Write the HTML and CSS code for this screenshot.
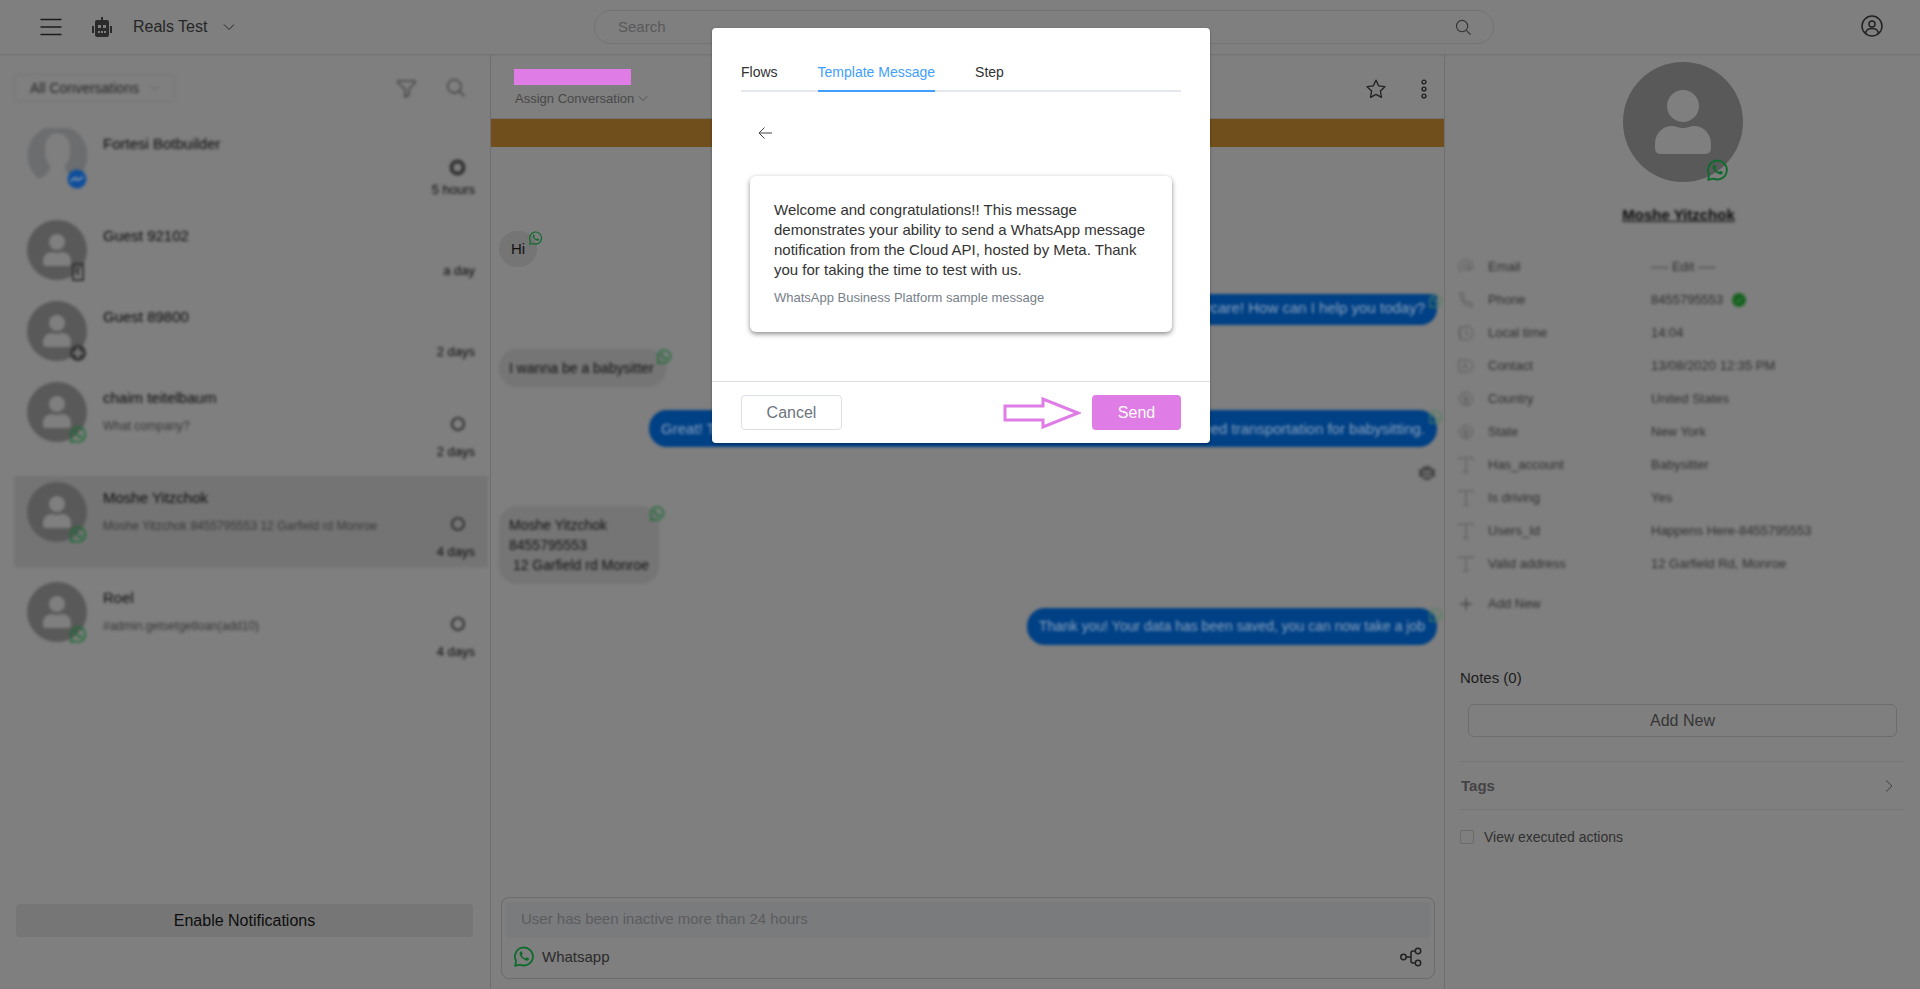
FILE: index.html
```html
<!DOCTYPE html>
<html lang="en">
<head>
<meta charset="utf-8">
<title>Conversations</title>
<link rel="stylesheet" href="styles.css">
</head>
<body>
<svg class="defs" aria-hidden="true">
  <symbol id="wa" viewBox="0 0 22 22"><path d="M1.200 20.800 2.200 15.600A9.400 9.400 0 1 1 6.600 19.600Z" fill="none" stroke="currentColor" stroke-width="1.900" stroke-linejoin="round"/><path d="M8 5.900c-.5-.6-1.300-.3-1.700.3-1.300 1.900.2 4.500 2.200 6.500 2.200 2.200 4.900 3.500 6.600 2.200.8-.6.9-1.500.6-1.900l-2.200-1.200c-.7-.2-1.100 1.100-1.700 1.100-1.400-.5-2.900-1.900-3.500-3.300 0-.6 1.100-1 .8-1.700Z" fill="currentColor"/></symbol>
  <symbol id="person" viewBox="0 0 120 120"><circle cx="60" cy="60" r="60" fill="#595959"/><circle cx="60" cy="44" r="16" fill="#7f7f7f"/><path d="M32 86V82C32 71 40 64 49 64c4 0 6 2 11 2s7-2 11-2c9 0 17 7 17 18v4q0 6-6 6H38q-6 0-6-6Z" fill="#7f7f7f"/></symbol>
  <symbol id="silhouette" viewBox="0 0 60 60"><path d="M12 51A30 30 0 1 1 49 51C42 47 38 44 38 38c5-6 5-10 5-17C43 10 37 5 30 5s-12 6-12 16c0 7 1 12 5 17 0 6-4 9-11 13Z" fill="#6b6d6f"/></symbol>
  <symbol id="down" viewBox="0 0 12 8"><path d="M1 1.500 6 6.500 11 1.500" fill="none" stroke="currentColor"/></symbol>
  <symbol id="lens" viewBox="0 0 18 18"><circle cx="7.500" cy="7.500" r="6" fill="none" stroke="currentColor" stroke-width="1.200"/><path d="m12 12 4.500 4.500" stroke="currentColor" stroke-width="1.200"/></symbol>
  <symbol id="bot" viewBox="0 0 20 20"><path d="M9 0h2v3h4a2 2 0 0 1 2 2v13a2 2 0 0 1-2 2H5a2 2 0 0 1-2-2V5a2 2 0 0 1 2-2h4ZM0 9h2v7H0ZM18 9h2v7h-2Z" fill="currentColor"/><path d="M6 8h3v3H6ZM11 8h3v3h-3ZM6 14h2v2H6ZM9 14h2v2H9ZM12 14h2v2h-2Z" fill="#7f7f7f"/></symbol>
  <symbol id="state" viewBox="0 0 16 16"><circle cx="8" cy="8" r="6" fill="none" stroke="currentColor" stroke-width="2.200"/></symbol>
  <symbol id="text" viewBox="0 0 16 16"><path d="M1 3V1h14v2M8 1v14M5 15h6" fill="none" stroke="currentColor"/></symbol>
  <symbol id="pin" viewBox="0 0 16 16"><circle cx="8" cy="8" r="6.500" fill="none" stroke="currentColor"/><path d="M6 4v8M6 8h5M6 12h5M9 5v6" fill="none" stroke="currentColor"/></symbol>
</svg>

<header class="topbar">
  <div class="brand">
    <button class="bare" aria-label="Menu"><svg width="22" height="18" viewBox="0 0 22 18"><path d="M0.500 1.500h21M0.500 9h21M0.500 16.500h21" stroke="#1c1c1c" stroke-width="1.500"/></svg></button>
    <svg class="brand-bot" width="20" height="20"><use href="#bot"/></svg>
    <button class="bare workspace">Reals Test <svg width="12" height="8"><use href="#down"/></svg></button>
  </div>
  <div class="search"><input type="text" placeholder="Search" aria-label="Search"><svg width="17" height="17"><use href="#lens"/></svg></div>
  <button class="bare account" aria-label="Account"><svg width="22" height="22" viewBox="0 0 22 22" fill="none" stroke="#222" stroke-width="1.500"><circle cx="11" cy="11" r="10"/><circle cx="11" cy="9" r="3"/><path d="M4.500 18.500c.5-4 3-5 6.500-5s6 1 6.500 5"/></svg></button>
</header>

<div class="columns">
  <aside class="sidebar">
    <div class="soft">
      <div class="filters">
        <button class="picker">All Conversations <svg width="10" height="7"><use href="#down"/></svg></button>
        <button class="bare" aria-label="Filter"><svg width="19" height="19" viewBox="0 0 19 19"><path d="M1 2h17v2l-6 6v6l-4 2v-8L1 4Z" fill="none" stroke="#444" stroke-width="1.500"/></svg></button>
        <button class="bare" aria-label="Search conversations"><svg width="20" height="20"><use href="#lens"/></svg></button>
      </div>
      <ul class="list">
        <li class="item mid">
          <div class="avatar"><svg width="60" height="60"><use href="#silhouette"/></svg><svg class="mark" width="20" height="20" viewBox="0 0 20 20"><circle cx="10" cy="10" r="9.500" fill="#0f4f9c"/><path d="m4 12 4-3 3 2 5-3" fill="none" stroke="#8393a5" stroke-width="2"/></svg></div>
          <div class="who"><b>Fortesi Botbuilder</b></div>
          <div class="meta"><svg width="17" height="17" viewBox="0 0 17 17"><circle cx="8.500" cy="8.500" r="6" fill="none" stroke="#333" stroke-width="4"/></svg><span>5 hours</span></div>
        </li>
        <li class="item short">
          <div class="avatar"><svg width="60" height="60"><use href="#person"/></svg><svg class="mark" width="18" height="18" viewBox="0 0 18 18"><path d="M4 1h10v16H4Z" fill="none" stroke="#333" stroke-width="2"/><path d="M9 5v8" stroke="#333" stroke-width="2"/></svg></div>
          <div class="who"><b>Guest 92102</b></div>
          <div class="meta"><span>a day</span></div>
        </li>
        <li class="item short">
          <div class="avatar"><svg width="60" height="60"><use href="#person"/></svg><svg class="mark" width="18" height="18" viewBox="0 0 18 18"><circle cx="9" cy="9" r="8" fill="#333"/><path d="M9 4v10M4 9h10" stroke="#777" stroke-width="3"/></svg></div>
          <div class="who"><b>Guest 89800</b></div>
          <div class="meta"><span>2 days</span></div>
        </li>
        <li class="item">
          <div class="avatar"><svg width="60" height="60"><use href="#person"/></svg><svg class="mark wa" width="17" height="17"><use href="#wa"/></svg></div>
          <div class="who"><b>chaim teitelbaum</b><span>What company?</span></div>
          <div class="meta"><svg width="16" height="16"><use href="#state"/></svg><span>2 days</span></div>
        </li>
        <li class="item selected">
          <div class="avatar"><svg width="60" height="60"><use href="#person"/></svg><svg class="mark wa" width="17" height="17"><use href="#wa"/></svg></div>
          <div class="who"><b>Moshe Yitzchok</b><span>Moshe Yitzchok 8455795553 12 Garfield rd Monroe</span></div>
          <div class="meta"><svg width="16" height="16"><use href="#state"/></svg><span>4 days</span></div>
        </li>
        <li class="item">
          <div class="avatar"><svg width="60" height="60"><use href="#person"/></svg><svg class="mark wa" width="17" height="17"><use href="#wa"/></svg></div>
          <div class="who"><b>Roel</b><span>#admin.getsetgetloan(add10)</span></div>
          <div class="meta"><svg width="16" height="16"><use href="#state"/></svg><span>4 days</span></div>
        </li>
      </ul>
    </div>
    <button class="enable">Enable Notifications</button>
  </aside>

  <main class="chat">
    <div class="chat-head">
      <div class="contact"><div class="redacted"></div><button class="bare assign">Assign Conversation <svg width="10" height="7"><use href="#down"/></svg></button></div>
      <button class="bare" aria-label="Favourite"><svg width="20" height="20" viewBox="0 0 20 20"><path d="m10 1.200 2.700 5.700 6.200.8-4.500 4.300 1.100 6.400-5.500-3-5.500 3 1.100-6.400L1.100 7.700l6.200-.8Z" fill="none" stroke="#222" stroke-width="1.300" stroke-linejoin="round"/></svg></button>
      <button class="bare" aria-label="More"><svg width="8" height="20" viewBox="0 0 8 20" fill="none" stroke="#222" stroke-width="1.400"><circle cx="4" cy="3" r="1.900"/><circle cx="4" cy="10" r="1.900"/><circle cx="4" cy="17" r="1.900"/></svg></button>
    </div>
    <div class="banner"></div>
    <div class="messages">
      <div class="msg in first">Hi<svg class="tag" width="14" height="14"><use href="#wa"/></svg></div>
      <div class="msg out cut blurred">Hi, thank you for contacting Anycare! How can I help you today?<svg class="tag" width="14" height="14"><use href="#wa"/></svg></div>
      <div class="msg in line blurred">I wanna be a babysitter<svg class="tag" width="15" height="15"><use href="#wa"/></svg></div>
      <div class="msg out wide blurred"><span>Great! To</span><span>need transportation for babysitting.</span><svg class="tag" width="14" height="14"><use href="#wa"/></svg></div>
      <svg class="sender blurred" width="20" height="18" viewBox="0 0 20 18"><path d="M2 5h3l2-3h6l2 3h3v8h-3l-2 3H7l-2-3H2Z" fill="#484848"/><path d="M6 8h8M6 12h8" stroke="#777" stroke-width="2"/></svg>
      <div class="msg in block blurred">Moshe Yitzchok<br>8455795553<br>&nbsp;12 Garfield rd Monroe<svg class="tag" width="15" height="15"><use href="#wa"/></svg></div>
      <div class="msg out last blurred">Thank you! Your data has been saved, you can now take a job<svg class="tag" width="14" height="14"><use href="#wa"/></svg></div>
    </div>
    <div class="composer">
      <input type="text" placeholder="User has been inactive more than 24 hours" aria-label="Message" disabled>
      <div class="channel"><svg class="wa" width="21" height="21"><use href="#wa"/></svg><span>Whatsapp</span>
        <button class="bare" aria-label="Send flow"><svg width="22" height="20" viewBox="0 0 22 20" fill="none" stroke="#222" stroke-width="1.500"><circle cx="3.500" cy="10" r="2.700"/><circle cx="18" cy="4" r="2.700"/><circle cx="18" cy="16" r="2.700"/><path d="M6.200 10H11M15.300 4H13q-2 0-2 2v8q0 2 2 2h2.300"/></svg></button></div>
    </div>
  </main>

  <aside class="details">
    <div class="portrait"><svg width="120" height="120"><use href="#person"/></svg><svg class="mark wa" width="22" height="22"><use href="#wa"/></svg></div>
    <a class="name blurred" href="#">Moshe Yitzchok</a>
    <dl class="fields blurred">
      <div><dt><svg width="16" height="16" viewBox="0 0 16 16" fill="none" stroke="currentColor"><circle cx="8" cy="8" r="3"/><path d="M11 5v5q4 2 4-2a7 7 0 1 0-11 5.500"/></svg>Email</dt><dd>---- Edit ----</dd></div>
      <div><dt><svg width="16" height="16" viewBox="0 0 16 16" fill="none" stroke="currentColor"><path d="M2 1c0 8 5 13 12 14v-4l-4-1-2 1L5 7l1-2-1-4Z"/></svg>Phone</dt><dd>8455795553 <svg class="ok" width="14" height="14" viewBox="0 0 14 14"><circle cx="7" cy="7" r="7" fill="#17621f"/><path d="m4 7 2 2 4-4" fill="none" stroke="#56805a" stroke-width="1"/></svg></dd></div>
      <div><dt><svg width="16" height="16" viewBox="0 0 16 16" fill="none" stroke="currentColor"><circle cx="8" cy="8" r="7"/><path d="M2 1v14M8 4v5h3"/></svg>Local time</dt><dd>14:04</dd></div>
      <div><dt><svg width="16" height="16" viewBox="0 0 16 16" fill="none" stroke="currentColor"><path d="M1 2h8a6 6 0 0 1 0 12H1ZM5 11l2-6 3 6"/></svg>Contact</dt><dd>13/08/2020 12:35 PM</dd></div>
      <div><dt><svg width="16" height="16"><use href="#pin"/></svg>Country</dt><dd>United States</dd></div>
      <div><dt><svg width="16" height="16"><use href="#pin"/></svg>State</dt><dd>New York</dd></div>
      <div><dt><svg width="16" height="16"><use href="#text"/></svg>Has_account</dt><dd>Babysitter</dd></div>
      <div><dt><svg width="16" height="16"><use href="#text"/></svg>Is driving</dt><dd>Yes</dd></div>
      <div><dt><svg width="16" height="16"><use href="#text"/></svg>Users_Id</dt><dd>Happens Here-8455795553</dd></div>
      <div><dt><svg width="16" height="16"><use href="#text"/></svg>Valid address</dt><dd>12 Garfield Rd, Monroe</dd></div>
    </dl>
    <button class="bare add-field blurred"><svg width="12" height="12" viewBox="0 0 12 12"><path d="M6 0v12M0 6h12" stroke="currentColor"/></svg>Add New</button>
    <h2 class="notes">Notes (0)</h2>
    <button class="add-note">Add New</button>
    <button class="tags">Tags <svg width="8" height="12" viewBox="0 0 8 12"><path d="m1 .5 6 5.500-6 5.500" fill="none" stroke="#444"/></svg></button>
    <label class="executed"><input type="checkbox">View executed actions</label>
  </aside>
</div>

<div class="modal" role="dialog" aria-label="Send message">
  <div class="modal-body">
    <nav class="tabs"><a href="#">Flows</a><a href="#" class="active">Template Message</a><a href="#">Step</a></nav>
    <button class="bare back" aria-label="Back"><svg width="14" height="12" viewBox="0 0 14 12"><path d="M6.500.5 1 6l5.500 5.500M1 6h13" fill="none" stroke="#444"/></svg></button>
    <div class="card">
      <p>Welcome and congratulations!! This message demonstrates your ability to send a WhatsApp message notification from the Cloud API, hosted by Meta. Thank you for taking the time to test with us.</p>
      <small>WhatsApp Business Platform sample message</small>
    </div>
  </div>
  <div class="modal-foot">
    <button class="cancel">Cancel</button>
    <svg class="pointer" width="78" height="32" viewBox="0 0 78 32"><path d="M2 9h38V2l35 14-35 14v-7H2Z" fill="none" stroke="#df7ce6" stroke-width="3"/></svg>
    <button class="send">Send</button>
  </div>
</div>
</body>
</html>
```
FILE: styles.css
```css
* { box-sizing: border-box; }
body {
  margin: 0; min-height: 100vh; display: flex; flex-direction: column;
  background: #7f7f7f; color: #1c1c1c;
  font: 15px/20px "Liberation Sans", Arial, sans-serif;
}
svg { display: block; flex: none; }
button, input { font: inherit; }
.defs { position: absolute; width: 0; height: 0; }
.bare { border: 0; padding: 0; background: none; color: inherit; }
.wa, .tag { color: #0e6b2d; }
.blurred, .soft { filter: blur(1.4px); }

.topbar { height: 54px; display: flex; align-items: center; padding: 0 37px 0 40px; box-shadow: 0 1px 2px #707070; }
.brand { flex: 0 0 554px; display: flex; align-items: center; }
.brand-bot { margin: 0 21px 0 30px; color: #2b2b2b; }
.workspace { display: flex; align-items: center; gap: 16px; font-size: 16px; color: #262626; }
.search { flex: 0 1 900px; height: 34px; display: flex; align-items: center; padding: 0 21px; border: 1px solid #737373; border-radius: 17px; color: #333; }
.search input { flex: 1; min-width: 0; border: 0; outline: 0; background: none; }
.search input::placeholder { color: #595959; opacity: 1; }
.account { margin-left: auto; padding-bottom: 3px; }

.columns { flex: 1; display: grid; grid-template-columns: 491px minmax(0, 1fr) 475px; }

.sidebar { display: flex; flex-direction: column; justify-content: space-between; border-right: 1px solid #6e6e6e; padding: 20px 2px 52px 14px; }
.filters { display: flex; align-items: center; gap: 30px; padding-right: 22px; color: #3c3c3c; }
.picker { display: flex; align-items: center; justify-content: space-between; width: 161px; height: 28px; margin-right: auto; padding: 0 14px 0 15px; border: 1px solid #747474; border-radius: 4px; background: none; color: #262626; font-size: 14px; white-space: nowrap; }
.picker svg { color: #606060; }
.list { list-style: none; margin: 20px 0 0; padding: 0; display: flex; flex-direction: column; gap: 9px; }
.item { height: 91px; display: flex; gap: 16px; padding: 6px 13px; }
.item.mid { height: 83px; }
.item.short { height: 72px; }
.selected { background: #747474; }
.avatar { position: relative; width: 60px; height: 60px; }
.mark { position: absolute; right: 0; bottom: 0; }
.avatar .mark { bottom: -1px; }
.who { flex: 1; display: flex; flex-direction: column; gap: 8px; padding-top: 6px; min-width: 0; }
.who b { font-weight: 400; color: #0c0c0c; }
.who span { font-size: 12px; color: #383838; white-space: nowrap; }
.meta { display: flex; flex-direction: column; align-items: flex-end; justify-content: flex-end; gap: 11px; color: #333; }
.meta svg { margin-right: 9px; }
.mid .meta { gap: 5px; }
.meta span { font-size: 13px; line-height: 18px; color: #0c0c0c; }
.enable { height: 33px; margin: 0 15px 0 2px; border: 0; border-radius: 4px; background: #767676; color: #0d0d0d; font-size: 16px; }

.chat { display: flex; flex-direction: column; border-right: 1px solid #6e6e6e; min-width: 0; }
.chat-head { height: 65px; display: flex; align-items: center; gap: 34px; padding: 5px 16px 0 23px; border-bottom: 1px solid #707070; }
.contact { margin-right: auto; }
.redacted { width: 117px; height: 16px; background: #df7ce6; }
.assign { display: flex; align-items: center; gap: 4px; margin: 4px 0 0 1px; font-size: 13px; color: #484848; }
.banner { height: 28px; background: #704f1d; }
.messages { flex: 1; display: flex; flex-direction: column; align-items: flex-start; padding: 84px 7px 0 8px; overflow: hidden; }
.msg { position: relative; padding: 8px 12px; border-radius: 18px; background: #757575; color: #111; white-space: nowrap; }
.msg.line { padding: 9px 12px 9px 10px; font-size: 14px; }
.msg.block { margin: 24px 0; padding: 9px 10px; font-size: 14px; }
.msg.out { align-self: flex-end; padding: 9px 12px; background: #004085; color: #8ba4bf; line-height: 19px; }
.msg.out.last { font-size: 14px; }
.tag { position: absolute; top: 0; right: -6px; }
.out .tag { color: #4b8160; right: -6px; }
.msg.out.cut { margin: 27px 0 24px; padding: 4px 12px 8px; border-radius: 4px 4px 16px 16px; }
.msg.wide { width: 84%; margin: 23px 0 17px; display: flex; justify-content: space-between; }
.sender { align-self: flex-end; }
.composer { margin: 0 9px 10px 10px; padding: 4px; border: 1px solid #6b6b6b; border-radius: 8px; }
.composer input { display: block; width: 100%; height: 36px; padding: 0 15px 4px; border: 0; border-radius: 4px; background: #7a7b7d; }
.composer input::placeholder { color: #5c5c5e; opacity: 1; }
.channel { display: flex; align-items: center; gap: 7px; padding: 8px 8px 7px; color: #2b2b2b; }
.channel button { margin-left: auto; }

.details { display: flex; flex-direction: column; padding: 8px 15px 0; }
.portrait { position: relative; align-self: center; }
.portrait .mark { right: 14px; bottom: 1px; }
.name { align-self: center; margin-top: 23px; padding-right: 8px; font-weight: 700; color: #0c0c0c; }
.fields { margin: 25px 0 0; font-size: 13px; color: #303030; }
.fields div { display: flex; align-items: center; height: 33px; }
.fields dt { flex: 0 0 191px; display: flex; align-items: center; gap: 14px; }
.fields dt svg { color: #585858; margin-left: -2px; }
.fields dd { margin: 0; display: flex; align-items: center; gap: 9px; }
.add-field { display: flex; align-items: center; gap: 16px; margin-top: 14px; font-size: 13px; color: #303030; }
.notes { margin: 54px 0 0; font-size: 15px; font-weight: 400; line-height: 20px; }
.add-note { height: 33px; margin: 16px 8px 24px; border: 1px solid #6d6d6d; border-radius: 6px; background: none; color: #363636; font-size: 16px; }
.tags { display: flex; align-items: center; justify-content: space-between; height: 49px; padding: 0 12px 0 1px; border: solid #757575; border-width: 1px 0; background: none; color: #444; font-weight: 700; }
.executed { display: flex; align-items: center; gap: 10px; margin-top: 17px; font-size: 14px; color: #303030; }
.executed input { appearance: none; width: 14px; height: 14px; margin: 0; border: 1px solid #6b6b6b; border-radius: 2px; }

.modal { position: absolute; top: 28px; left: 712px; right: 710px; background: #fff; border-radius: 4px; box-shadow: 0 1px 3px #0000004d; color: #333; }
.modal-body { padding: 34px 29px 49px; }
.tabs { display: flex; gap: 40px; border-bottom: 2px solid #e4e7ed; font-size: 14px; }
.tabs a { height: 30px; margin-bottom: -2px; color: #303133; text-decoration: none; }
.tabs .active { color: #409eff; border-bottom: 2px solid #409eff; }
.back { display: block; margin: 35px 0 37px 17px; }
.card { margin: 0 9px; padding: 24px; border-radius: 6px; box-shadow: 0 2px 5px #00000073; }
.card p { margin: 0 0 8px; }
.card small { display: block; font-size: 13px; color: #76808a; }
.modal-foot { display: flex; align-items: center; padding: 13px 29px; border-top: 1px solid #dcdfe0; }
.modal-foot button { height: 35px; border-radius: 4px; font-size: 16px; }
.cancel { width: 101px; border: 1px solid #dcdfe6; background: #fff; color: #6c757d; }
.pointer { margin: 0 11px 0 auto; }
.modal-foot .send { width: 89px; border: 0; background: #df7ce6; color: #fff; }
```
